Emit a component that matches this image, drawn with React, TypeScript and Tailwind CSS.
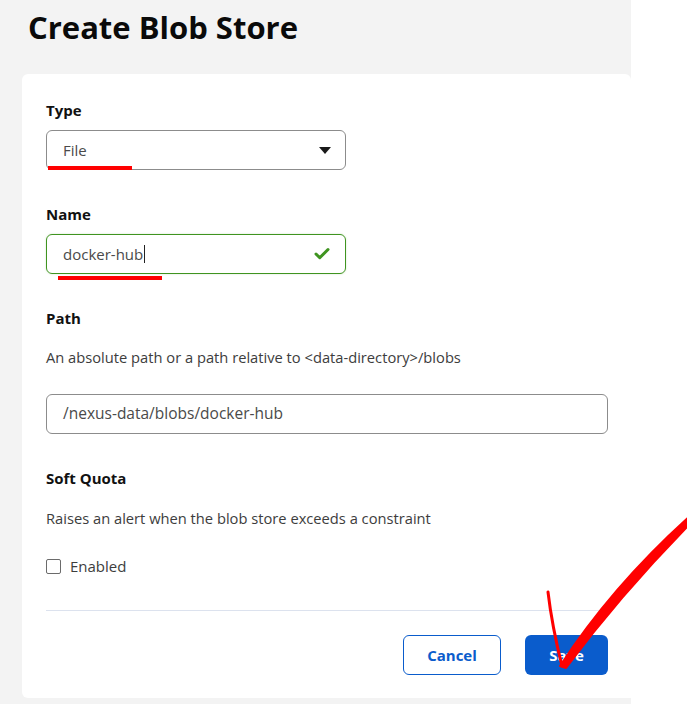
import { Check } from "lucide-react";

function Label({ children }: { children: React.ReactNode }) {
  return <p className="text-[15px] font-bold leading-5 text-[#111]">{children}</p>;
}

function Hint({ children }: { children: React.ReactNode }) {
  return <p className="text-[14.7px] leading-5 text-[#3d3d3d]">{children}</p>;
}

export default function App() {
  return (
    <div className="relative flex h-[704px] w-[687px] overflow-hidden bg-white [font-family:'Open_Sans',sans-serif]">
      <div className="flex w-[631px] flex-col bg-[#f3f3f3] pl-[22px]">
        <h1 className="pl-[6px] pt-[7px] text-[31px] font-bold leading-10 text-[#0a0a0a]">
          Create Blob Store
        </h1>

        <div className="mt-[27px] flex h-[624px] flex-col rounded-l-md rounded-tr-md bg-white pl-6 pr-[23px] pt-[26px] pb-[23px]">
          <Label>Type</Label>
          <div className="relative mt-[10px] flex h-10 w-[300px] items-center justify-between rounded-md border border-[#8c8c8c] pl-4 pr-[14px]">
            <span className="text-[15px] text-[#4a4a4a]">File</span>
            <svg width="12" height="7" viewBox="0 0 12 7">
              <path d="M0 0h12L6 7z" fill="#1a1a1a" />
            </svg>
            <span className="absolute left-[1px] top-[35px] h-[4px] w-[84px] bg-[#ff0000]" />
          </div>

          <div className="mt-[34px]">
            <Label>Name</Label>
          </div>
          <div className="relative mt-[10px] flex h-10 w-[300px] items-center justify-between rounded-md border border-[#3f9420] pl-4 pr-[14px] shadow-[0_0_2px_rgba(63,148,32,0.25)]">
            <span className="flex items-center text-[15px] text-[#4a4a4a]">
              docker-hub
              <span className="ml-[1px] h-[18px] w-px bg-[#222]" />
            </span>
            <Check className="h-[18px] w-[18px] text-[#3f9420]" strokeWidth={4} />
            <span className="absolute left-[11px] top-[41px] h-[4px] w-[104px] bg-[#ff0000]" />
          </div>

          <div className="mt-[34px]">
            <Label>Path</Label>
          </div>
          <div className="mt-[19px]">
            <Hint>An absolute path or a path relative to &lt;data-directory&gt;/blobs</Hint>
          </div>
          <div className="mt-[27px] flex h-10 w-full items-center rounded-md border border-[#8c8c8c] pl-4">
            <span className="text-[15.5px] text-[#4a4a4a]">/nexus-data/blobs/docker-hub</span>
          </div>

          <div className="mt-[34px]">
            <Label>Soft Quota</Label>
          </div>
          <div className="mt-[20px]">
            <Hint>Raises an alert when the blob store exceeds a constraint</Hint>
          </div>
          <label className="mt-[28px] flex h-5 items-center gap-[9px]">
            <span className="h-[15px] w-[15px] rounded-[2px] border border-[#6b6b6b] bg-white" />
            <span className="text-[15px] text-[#3d3d3d]">Enabled</span>
          </label>

          <div className="mt-[34px] h-px w-full bg-[#dce2ee]" />

          <div className="mt-6 flex justify-end gap-6">
            <button className="h-10 w-[98px] rounded-md border border-[#0a5ccc] bg-white text-[15px] font-bold text-[#0a5ccc]">
              Cancel
            </button>
            <button className="h-10 w-[83px] rounded-md bg-[#0a5ccc] text-[15px] font-bold text-white">
              Save
            </button>
          </div>
        </div>
      </div>
      <div className="flex-1 bg-white" />

      {/* hand-drawn red check mark over the Save button */}
      <svg
        className="pointer-events-none absolute left-0 top-0"
        width="687"
        height="704"
        viewBox="0 0 687 704"
      >
        <path
          d="M548 592 C551 618 556 642 562 666"
          stroke="#ff0000"
          strokeWidth="3"
          fill="none"
          strokeLinecap="round"
        />
        <path
          d="M560 666 C590 620 630 570 690 516 L690 524 C640 575 598 625 566 668 Z"
          fill="#ff0000"
          stroke="#ff0000"
          strokeWidth="2"
          strokeLinejoin="round"
        />
      </svg>
    </div>
  );
}
